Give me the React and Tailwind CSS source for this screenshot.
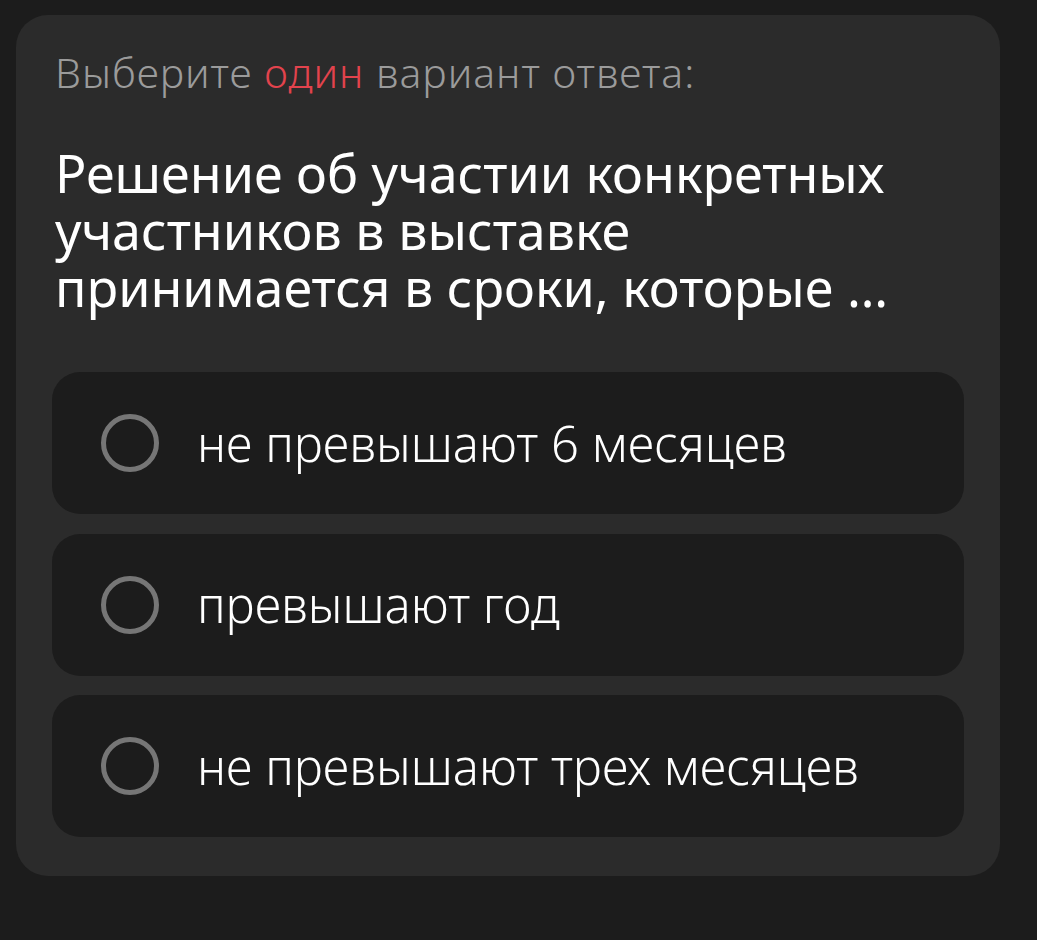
const options = ['не превышают 6 месяцев', 'превышают год', 'не превышают трех месяцев'];

const Option = ({ label }) => (
  <button className="flex h-[142px] w-full items-center rounded-[28px] bg-[#1c1c1c] pl-[49px] text-left">
    <span className="h-[58px] w-[58px] shrink-0 rounded-full border-[5px] border-[#767676]" />
    <span className="ml-[38px] text-[49px] font-light leading-none text-white">{label}</span>
  </button>
);

export default function App() {
  return (
    <div
      className="min-h-[940px] bg-[#1c1c1c] px-4 pt-[15px]"
      style={{ fontFamily: '"Noto Sans", "Open Sans", sans-serif' }}
    >
      <div className="w-[984px] rounded-[32px] bg-[#2b2b2b] px-9 pb-[39px] pt-[33px]">
        <p className="pl-[3px] text-[41px] font-light leading-[48px] tracking-[1px] text-[#9b9b9b]">
          Выберите <span className="text-[#e2434d]">один</span> вариант ответа:
        </p>
        <h1 className="mt-[48px] pl-[3px] text-[52px] font-normal leading-[57px] text-white">
          Решение об участии конкретных участников в выставке принимается в сроки, которые …
        </h1>
        <div className="mt-[57px] flex flex-col gap-[19.5px]">
          {options.map((o) => (
            <Option key={o} label={o} />
          ))}
        </div>
      </div>
    </div>
  );
}
